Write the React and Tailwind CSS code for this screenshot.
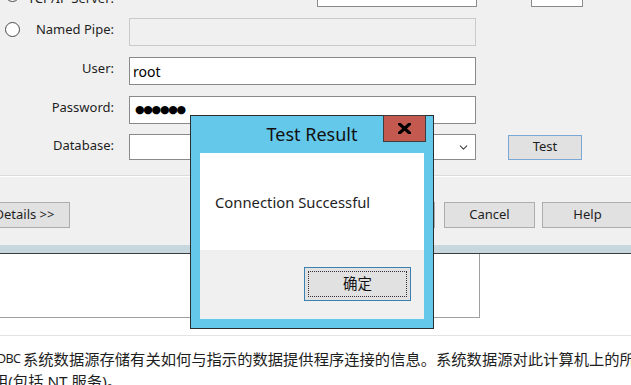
import { ChevronDown } from 'lucide-react';

function Radio({ className = '' }) {
  return <div className={`w-[15px] h-[15px] rounded-full border border-[#4a4a4a] bg-white shrink-0 ${className}`} />;
}

function WinButton({ children, className = '' }) {
  return (
    <div className={`h-[26px] bg-[#e1e1e1] border border-[#adadad] flex items-center justify-center text-[13px] text-[#1e1e1e] shrink-0 ${className}`}>
      {children}
    </div>
  );
}

export default function App() {
  const font = { fontFamily: '"Noto Sans", "Noto Sans CJK SC", sans-serif' };

  return (
    <div className="w-[631px] h-[385px] overflow-hidden relative bg-white" style={font}>
      {/* dialog form panel */}
      <div className="h-[245px] bg-[#f0f0f0] overflow-hidden flex flex-col">
        {/* TCP/IP row (cut at top) */}
        <div className="mt-[-21px] h-[28px] flex items-center">
          <div className="w-[26px] pl-[5px]">
            <Radio className="mt-[3px]" />
          </div>
          <div className="w-[88px] text-right text-[13px] text-[#1e1e1e] pt-[12px] whitespace-nowrap">TCP/IP Server:</div>
          <div className="ml-[203px] w-[160px] h-[28px] bg-white border border-[#8a8a8a]" />
          <div className="ml-[54px] w-[52px] h-[28px] bg-white border border-[#8a8a8a]" />
        </div>

        {/* Named Pipe */}
        <div className="mt-[11px] h-[28px] flex items-center">
          <div className="w-[26px] pl-[5px]">
            <Radio className="mb-[5px]" />
          </div>
          <div className="w-[88px] text-right text-[13px] text-[#1e1e1e] pb-[5px]">Named Pipe:</div>
          <div className="ml-[15px] w-[347px] h-[28px] bg-[#f0f0f0] border border-[#c8cacc]" />
        </div>

        {/* User */}
        <div className="mt-[11px] h-[28px] flex items-center">
          <div className="w-[26px]" />
          <div className="w-[88px] text-right text-[13px] text-[#1e1e1e] pb-[5px]">User:</div>
          <div className="ml-[15px] w-[347px] h-[28px] bg-white border border-[#8a8a8a] flex items-center pl-[3px] text-[14px] text-black">
            root
          </div>
        </div>

        {/* Password */}
        <div className="mt-[11px] h-[28px] flex items-center">
          <div className="w-[26px]" />
          <div className="w-[88px] text-right text-[13px] text-[#1e1e1e] pb-[5px]">Password:</div>
          <div className="ml-[15px] w-[347px] h-[28px] bg-white border border-[#8a8a8a] flex items-center pl-[5px] text-[11px] tracking-[-1.3px] text-black" style={{ fontFamily: '"DejaVu Sans", sans-serif' }}>
            ●●●●●●
          </div>
        </div>

        {/* Database */}
        <div className="mt-[10px] h-[26px] flex items-center">
          <div className="w-[26px]" />
          <div className="w-[88px] text-right text-[13px] text-[#1e1e1e] pb-[3px]">Database:</div>
          <div className="ml-[15px] w-[347px] h-[26px] bg-white border border-[#8a8a8a] flex items-center justify-end pr-[5px]">
            <ChevronDown size={13} strokeWidth={2.2} className="text-[#4a4a4a]" />
          </div>
          <div className="ml-[32px] w-[74px] h-[25px] bg-[#e1e1e1] border border-[#7aa7d6] flex items-center justify-center text-[13px] text-[#1e1e1e]">
            Test
          </div>
        </div>

        {/* separator */}
        <div className="mt-[15px] h-px bg-[#dcdcdc]" />
        <div className="h-px bg-white" />

        {/* bottom buttons */}
        <div className="mt-[25px] flex items-center">
          <WinButton className="ml-[-21px] w-[91px] border-[#8f8f8f]">Details &gt;&gt;</WinButton>
          <WinButton className="ml-[274px] w-[91px]">OK</WinButton>
          <WinButton className="ml-[9px] w-[91px] border-[#8f8f8f]">Cancel</WinButton>
          <WinButton className="ml-[7px] w-[91px] border-[#8f8f8f]">Help</WinButton>
        </div>
      </div>

      {/* tab band */}
      <div className="h-[9px] bg-[#c6d8de] border-b border-[#3c3c3c]" />

      {/* lower list area */}
      <div className="w-[480px] h-[64px] border-r border-b border-[#a0a0a0] bg-white" />
      <div className="mt-[17px] h-px bg-[#e3e3e3]" />
      <div className="mt-[12px] text-[15.3px] leading-[22px] text-[#1e1e1e] whitespace-nowrap">
        <div className="flex">
          <div className="w-[23px] shrink-0 flex justify-end">
            <span className="shrink-0 text-[12.5px] tracking-[-0.6px]">ODBC&nbsp;</span>
          </div>
          <span className="shrink-0">系统数据源存储有关如何与指示的数据提供程序连接的信息。系统数据源对此计算机上的所有</span>
        </div>
        <div className="ml-[-7px]">用(包括 NT 服务)。</div>
      </div>

      {/* Test Result message box */}
      <div className="absolute left-[190px] top-[115px] w-[244px] h-[214px] border border-[#2d2d2d] bg-[#64c8ea] flex flex-col">
        <div className="h-[37px] relative flex items-center justify-center text-[18px] text-[#111]">
          Test Result
          <div className="absolute top-[-1px] right-[7px] w-[43px] h-[27px] bg-[#c45a4f] border border-[#3d3d3d] flex items-center justify-center">
            <svg width="13" height="11" viewBox="0 0 13 11">
              <path d="M1.5 1 L11.5 10 M11.5 1 L1.5 10" stroke="#000" strokeWidth="3.2" strokeLinecap="square" />
            </svg>
          </div>
        </div>
        <div className="mx-[9px] flex flex-col">
          <div className="h-[97px] bg-white pl-[15px] pt-[39px] text-[14.8px] leading-[20px] text-[#1e1e1e]">
            Connection Successful
          </div>
          <div className="h-[69px] bg-[#f0f0f0] pt-[17px] pl-[104px]">
            <div className="relative w-[107px] h-[34px] bg-[#e1e1e1] border border-[#3c7fb1] flex items-center justify-center text-[14.5px] text-[#111]">
              确定
              <div className="absolute inset-[3px] border border-dotted border-[#333]" />
            </div>
          </div>
        </div>
      </div>
    </div>
  );
}
